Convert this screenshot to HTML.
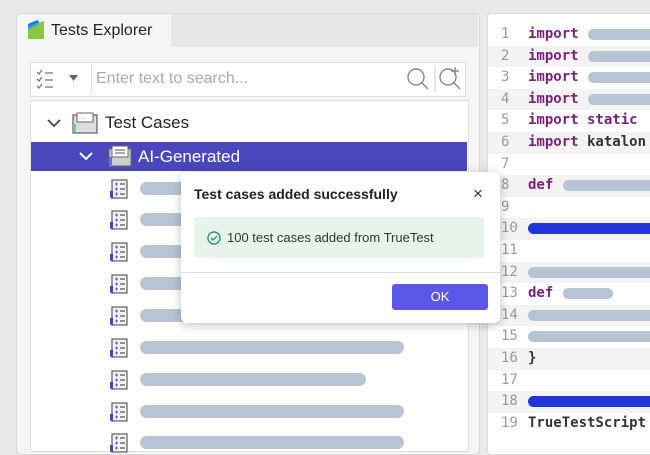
<!DOCTYPE html><html><head><style>
body{margin:0;width:650px;height:450px;background:#e9e9e9;font-family:"Liberation Sans",sans-serif;position:relative;overflow:hidden}
.a{position:absolute}
.bar{position:absolute;height:13px;border-radius:7px;background:#b6c4d4}
.code{font-family:"DejaVu Sans Mono","Liberation Mono",monospace;font-size:14px;font-weight:bold}
.ln{position:absolute;left:0;width:165px;height:21.6px}
.ln span.n{position:absolute;left:13px;color:#999;font-weight:normal;top:2px}
.ln span.c{position:absolute;left:40px;top:2px;color:#333;white-space:pre}
.k{color:#7b1f7b}
</style></head><body>
<div class="a" style="left:16px;top:13px;width:462px;height:440px;background:#f5f5f5;border:1px solid #d8d8d8;border-radius:4px"></div>
<div class="a" style="left:171px;top:14px;width:307px;height:33px;background:#e6e6e6"></div>
<svg class="a" style="left:27px;top:20px" width="18" height="20"><path d="M1 6 L17 1 L17 19 L1 19Z" fill="#8dc63f"/><path d="M1 6 L12 1 L12 4 L1 10Z" fill="#29a8e0"/><path d="M1 4 L10 0 L12 2 L1 7Z" fill="#1f7fc1"/></svg>
<div class="a" style="left:51px;top:22px;font-size:16px;color:#222">Tests Explorer</div>
<div class="a" style="left:30px;top:62px;width:434px;height:33px;background:#fff;border:1px solid #ddd"></div>
<svg class="a" style="left:36px;top:68px" width="50" height="22"><g stroke="#777" fill="none" stroke-width="1.3"><path d="M1 4l2 2 3-4M1 11l2 2 3-4M1 18l2 2 3-4M9 5h8M9 12h8M9 19h8"/></g><path d="M33 7h9l-4.5 6z" fill="#666"/></svg>
<div class="a" style="left:91px;top:64px;width:1px;height:30px;background:#ddd"></div>
<div class="a" style="left:96px;top:70px;font-size:16px;color:#aaa">Enter text to search...</div>
<svg class="a" style="left:404px;top:64px" width="60" height="30"><g stroke="#888" fill="none" stroke-width="1.4"><circle cx="12" cy="13" r="8"/><path d="M18 19l6 6"/><path d="M31 2v26" stroke="#ddd"/><circle cx="44" cy="13" r="8"/><path d="M50 19l6 6M51 3v8M47 7h8"/></g></svg>
<div class="a" style="left:30px;top:100px;width:437px;height:350px;background:#fff;border:1px solid #e0e0e0"></div>
<svg class="a" style="left:46px;top:117px" width="16" height="12"><path d="M2 3l6 6 6-6" stroke="#444" stroke-width="1.8" fill="none"/></svg>
<svg class="a" style="left:72px;top:112px" width="26" height="22"><rect x="1" y="3" width="24" height="18" fill="#ddd" stroke="#666" stroke-width="1.3"/><rect x="5" y="1" width="16" height="9" fill="#fff" stroke="#666"/><text x="8" y="8" font-size="6" fill="#333">···</text><rect x="1" y="12" width="3" height="8" fill="#6c9"/></svg>
<div class="a" style="left:105px;top:113px;font-size:17px;color:#222">Test Cases</div>
<div class="a" style="left:31px;top:142px;width:436px;height:29px;background:#4a47bd"></div>
<svg class="a" style="left:78px;top:151px" width="16" height="12"><path d="M2 2l6 6 6-6" stroke="#fff" stroke-width="2" fill="none"/></svg>
<svg class="a" style="left:108px;top:145px" width="24" height="22"><rect x="1" y="4" width="22" height="17" fill="#ccc" stroke="#666"/><rect x="4" y="1" width="16" height="11" fill="#fff" stroke="#666"/><path d="M7 5h10M7 8h10" stroke="#555"/><rect x="1" y="12" width="3" height="8" fill="#66f"/></svg>
<div class="a" style="left:138px;top:147px;font-size:17px;color:#fff">AI-Generated</div>
<div id="rows"></div>
<script>
var ys=[189,220,252,284,316,348,380,412,443],ws=[264,264,264,264,264,264,226,264,264],h='';
ys.forEach(function(y,i){h+='<svg class="a" style="left:109px;top:'+(y-10)+'px" width="20" height="21"><rect x="3" y="1" width="15" height="18" fill="#f2f2f2" stroke="#666" stroke-width="1.3"/><path d="M6 5h3M7.5 3.5v3M6 10h3M7.5 8.5v3M6 15h3M7.5 13.5v3" stroke="#55f"/><path d="M11 5h5M11 10h5M11 15h5" stroke="#555" stroke-width="1.3"/><path d="M1 12v6a2 2 0 0 0 3 1v-7z" fill="#4448a8"/></svg><div class="bar" style="left:140px;top:'+(y-7)+'px;width:'+ws[i]+'px"></div>';});
document.getElementById('rows').innerHTML=h;
</script>
<div class="a code" style="left:487px;top:13px;width:170px;height:440px;background:#fff;border:1px solid #ddd;border-radius:4px;overflow:hidden">
<div id="code" style="position:relative;top:10px"></div></div>
<script>
var L=[['<span class="k">import</span>','b'],['<span class="k">import</span>','b'],['<span class="k">import</span>','b'],['<span class="k">import</span>','b'],['<span class="k">import static</span>'],['<span class="k">import</span> katalon'],[''],['<span class="k">def</span>','d'],[''],['','blue'],[''],['','g'],['<span class="k">def</span>','s'],['','g'],['','g'],['}'],[''],['','blue'],['TrueTestScript']];
var c='';L.forEach(function(l,i){var bg=(i%2==1)?'#f3f3f3':'#fff';var extra='';
if(l[1]=='b')extra='<div class="bar" style="left:100px;top:5px;width:80px;height:11px;background:#b6c4d4"></div>';
if(l[1]=='d')extra='<div class="bar" style="left:75px;top:5px;width:100px;height:11px"></div>';
if(l[1]=='s')extra='<div class="bar" style="left:75px;top:5px;width:50px;height:11px"></div>';
if(l[1]=='g')extra='<div class="bar" style="left:40px;top:5px;width:140px;height:11px"></div>';
if(l[1]=='blue')extra='<div class="bar" style="left:40px;top:5px;width:140px;height:11px;background:#2137db"></div>';
c+='<div class="ln" style="top:'+(i*21.6)+'px;background:'+bg+'"><span class="n">'+(i+1)+'</span><span class="c">'+l[0]+'</span>'+extra+'</div>';});
document.getElementById('code').innerHTML=c;
</script>
<div class="a" style="left:181px;top:172px;width:319px;height:151px;background:#fff;border-radius:6px;box-shadow:0 2px 10px rgba(0,0,0,.25)"></div>
<div class="a" style="left:194px;top:186px;font-size:14px;font-weight:bold;color:#222">Test cases added successfully</div>
<div class="a" style="left:473px;top:184px;font-size:17px;color:#333">×</div>
<div class="a" style="left:194px;top:217px;width:290px;height:41px;background:#e7f4ee;border-radius:3px"></div>
<svg class="a" style="left:207px;top:231px" width="14" height="14"><circle cx="7" cy="7" r="6" fill="none" stroke="#2a9467" stroke-width="1.4"/><path d="M4 7l2 2 4-4" stroke="#2a9467" stroke-width="1.4" fill="none"/></svg>
<div class="a" style="left:227px;top:230px;font-size:13px;color:#333">100 test cases added from TrueTest</div>
<div class="a" style="left:181px;top:272px;width:319px;height:1px;background:#ddd"></div>
<div class="a" style="left:392px;top:284px;width:96px;height:26px;background:#5b57e8;border-radius:3px;color:#fff;font-size:13px;text-align:center;line-height:26px">OK</div>
</body></html>
